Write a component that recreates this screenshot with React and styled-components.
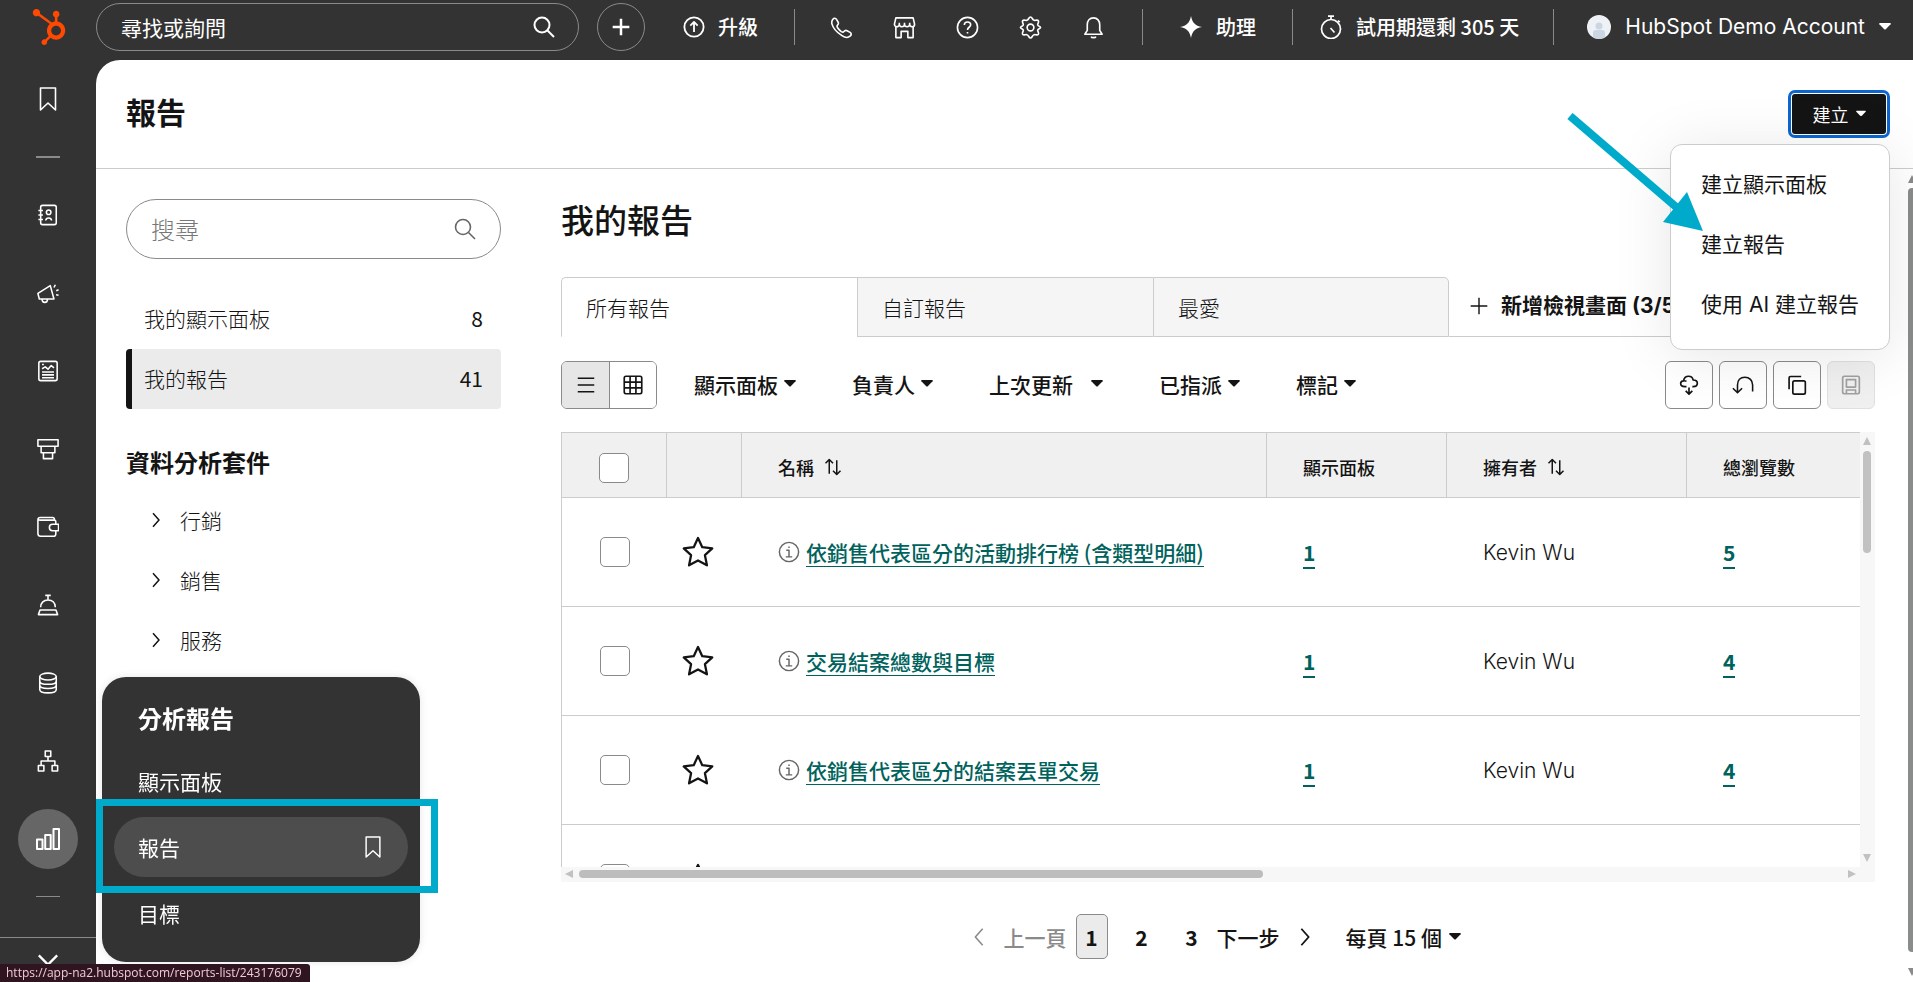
import styled, { createGlobalStyle, css } from 'styled-components'
import { FaHubspot } from 'react-icons/fa'

const ICONS = {
  search: <><circle cx="10" cy="10" r="7.5" /><path d="M15.5 15.5 22 22" /></>,
  plus: <path d="M12 2v20M2 12h20" />,
  upgrade: <><circle cx="12" cy="12" r="10.5" /><path d="M12 17.5V7M8 10.5l4-4 4 4" /></>,
  phone: <path d="M3 3.5C4 2 6 2 6.800 3.500L8.500 6.500c.8 1.400.2 2.300-.8 3.300-.7.8-.4 1.700.4 2.800 1 1.400 2.300 2.700 3.700 3.700 1.100.7 2 .9 2.700 0 1-1.300 2-1.700 3.300-1l3.200 1.800c1.500.9 1.500 2.600-.1 4-2.200 1.900-5 1.700-8.400-.6C7 17 3 12 2 8.200 1.500 6.300 2 4.800 3 3.500z" />,
  store: <><path d="M3 2h18l1.500 6.500c0 1.700-1.200 2.700-2.400 2.700s-2.700-1-2.700-2.500c0 1.500-1.400 2.500-2.700 2.500S12 10.200 12 8.700c0 1.500-1.400 2.500-2.700 2.500s-2.700-1-2.700-2.500c0 1.500-1.500 2.500-2.700 2.500S1.500 10.200 1.500 8.500L3 2zM6.600 8.700V7M12 8.700V7M17.400 8.700V7" /><path d="M3 11.200V22.500h5.500V16h7v6.500H21V11.200" /></>,
  help: <><circle cx="12" cy="12" r="10.5" /><path d="M8.700 9.500c0-2 1.400-3.300 3.300-3.300s3.300 1.200 3.300 3c0 2.500-3.300 2.600-3.300 5.300M12 16.800v1.400" /></>,
  gear: <><path d="M12 1c1.700 0 1.800 2.600 3.300 3.300 1.500.8 3.800-.9 4.900.6 1 1.500-.9 2.900-.7 4.500.1 1.200 3 1.500 3 2.600s-2.900 1.400-3 2.600c-.2 1.600 1.700 3 .7 4.500-1.100 1.500-3.400-.2-4.900.6-1.500.7-1.600 3.300-3.300 3.300s-1.800-2.600-3.300-3.300c-1.500-.8-3.800.9-4.900-.6-1-1.500.9-2.900.7-4.500-.1-1.200-3-1.500-3-2.600s2.900-1.400 3-2.600c.2-1.600-1.700-3-.7-4.500 1.100-1.500 3.400.2 4.900-.6C10.200 3.600 10.300 1 12 1z" /><circle cx="12" cy="12" r="3.5" /></>,
  bell: <><path d="M3 19h18l-2.500-4V9.200C18.500 5 16 2 12 2S5.500 5 5.500 9.200V15z" /><path d="M9.500 21.500c.6 1.500 4.400 1.500 5 0" /></>,
  timer: <><circle cx="12" cy="14" r="9.500" /><path d="M9 1.200h6M12 1.200v3.300M19 5.500l1.700 1.700M11.500 13l4 4.500" /></>,
  bookmark: <path d="M4.500 1h15v22L12 16l-7.500 7z" />,
  contacts: <><rect x="4" y="1.500" width="17" height="21" rx="2" /><path d="M1.500 7h5M1.500 12h5M1.500 17h5M9.500 18c.5-3.500 5.900-3.500 6.400 0" /><circle cx="12.700" cy="9" r="2.500" /></>,
  megaphone: <path d="M1 12.500 14.500 4l4 14.500H2.500zM5.500 18.500c0 5 6 5 6 0M18.500 6l1.500-3M21 9.500l2.500-1M20.800 14l2.700.5" />,
  content: <><rect x="2" y="1.500" width="20" height="21" rx="2" /><path d="M5.500 13h13M5.500 16.200h13M5.500 19.300h13M5.500 9.500l3.500-2 3 2.500 3.500-4 3 2.500M5.500 5h2" /></>,
  funnel: <path d="M1 2h22v7H1zM4.500 9h15v7h-15zM7 16h10v6.500H7z" />,
  wallet: <><path d="M20.500 9V6c0-1-.7-1.500-1.700-1.500H3.500C2 4.500 1 3.700 1 2.700M19 4.500V3.700c0-1.200-.7-2-2-2H3.500C2 1.700 1 2.700 1 4v15c0 2 1 3 3 3h14c1.700 0 2.500-.9 2.500-2.500V16" /><path d="M23.500 9H17a3.500 3.500 0 0 0 0 7h6.500z" /></>,
  service: <path d="M1.500 22.500h21l-1.800-5H3.300zM4 14.500c0-5 3.500-8 8-8s8 3 8 8M12 6.500V2M9 1.500h6" />,
  data: <><ellipse cx="12" cy="5" rx="9" ry="3.800" /><path d="M3 5v14c0 5 18 5 18 0V5M3 9.700c0 5 18 5 18 0M3 14.300c0 5 18 5 18 0" /></>,
  tree: <path d="M9 1h6v6H9zM1.500 17h6v6h-6zM16.500 17h6v6h-6zM12 7v5M4.500 17v-5h15v5" />,
  chart: <path d="M1 12.500h5.500V22H1zM9.200 8h5.500v14H9.200zM17.500 2H23v20h-5.500z" />,
  right: <path d="m8 3 8 9-8 9" />,
  left: <path d="m16 3-8 9 8 9" />,
  down: <path d="m2 7 10 10L22 7" />,
  list: <path d="M1 3h22M1 12h22M1 21h22" />,
  grid: <><rect x="1.500" y="1.500" width="21" height="21" rx="2" /><path d="M8.500 1.500v21M15.500 1.500v21M1.500 8.500h21M1.500 15.500h21" /></>,
  sort: <path d="M7 21V2M2 7l5-5 5 5M17 3v19M12 17l5 5 5-5" />,
  star: <path d="m12 1.500 3.200 6.900 7.500.9-5.500 5.100 1.500 7.600L12 18.300 5.300 22l1.500-7.600L1.300 9.300l7.500-.9z" />,
  info: <><circle cx="12" cy="12" r="10.5" /><path d="M9 10h3v7M8.500 17.300h7M12 6v1.700" /></>,
  cloud: <><path d="M7 14c-3 0-5-1.200-5-3.700S3.800 7 5.500 7C6 3.500 8.500 1.500 11.500 1.500S16.500 3.500 17 6c3 0 5 1.500 5 4s-2 4-5 4h-1M9 7.500c-1.500-.5-2.500-.7-3.500-.5M7 14h2" /><path d="M12 15v7.500M8 19l4 4 4-4" /></>,
  undo: <path d="M6 20V12c0-5 3-8.500 8-8.500s8.500 3.500 8.500 8.500v7M1 15.500l5 5 5-5" />,
  copy: <><rect x="7" y="7" width="15" height="16" rx="2" /><path d="M2.500 17V3.500c0-1 .6-1.700 1.700-1.700H17" /></>,
  save: <><rect x="2" y="1.500" width="20" height="21" rx="2" /><path d="M6.500 5.500h11v9h-11zM6.500 22.500V18h11v4.500" /></>,
}

const Icon = ({ name, size = 24, weight = 2 }) => (
  <svg width={size} height={size} viewBox="0 0 24 24" fill="none" stroke="currentColor" strokeWidth={weight} strokeLinejoin="round" aria-hidden="true">
    {ICONS[name]}
  </svg>
)

const Caret = ({ size = 12 }) => (
  <svg width={size} height={size} viewBox="0 0 12 12" fill="currentColor" aria-hidden="true">
    <path d="M1 2h10q1.300 0 .6 1.200L7 8q-1 1-2 0L.4 3.200Q-.3 2 1 2z" />
  </svg>
)

const NAV = ['contacts', 'megaphone', 'content', 'funnel', 'wallet', 'service', 'data', 'tree']
const TOOLS = ['phone', 'store', 'help', 'gear', 'bell']
const SUITES = ['行銷', '銷售', '服務']
const TABS = ['所有報告', '自訂報告', '最愛']
const FILTERS = [
  { label: '顯示面板' },
  { label: '負責人' },
  { label: '上次更新', wide: true },
  { label: '已指派' },
  { label: '標記' },
]
const REPORTS = [
  { id: 1, name: '依銷售代表區分的活動排行榜 (含類型明細)', boards: 1, owner: 'Kevin Wu', views: 5 },
  { id: 2, name: '交易結案總數與目標', boards: 1, owner: 'Kevin Wu', views: 4 },
  { id: 3, name: '依銷售代表區分的結案丟單交易', boards: 1, owner: 'Kevin Wu', views: 4 },
  { id: 4 },
]

const Dropdown = ({ label, wide }) => (
  <DropdownLabel $wide={wide}>
    <Select aria-label={label}>
      <option>{label}</option>
    </Select>
    <Caret />
  </DropdownLabel>
)

export default function App() {
  return (
    <>
      <GlobalStyle />
      <Shell>
        <TopBar>
          <Logo href="#" aria-label="HubSpot"><FaHubspot size={36} /></Logo>
          <GlobalSearch>
            <GlobalInput placeholder="尋找或詢問" aria-label="尋找或詢問" />
            <Icon name="search" />
          </GlobalSearch>
          <RoundButton aria-label="新增"><Icon name="plus" size={20} weight={3} /></RoundButton>
          <TopItem $left={38}><Icon name="upgrade" size={22} />升級</TopItem>
          <Divider $left={36} />
          <Tools>
            {TOOLS.map(name => (
              <ToolButton key={name} aria-label={name}><Icon name={name} size={23} weight={1.7} /></ToolButton>
            ))}
          </Tools>
          <Divider $left={17} />
          <TopItem $left={36}>
            <svg width="24" height="24" viewBox="0 0 24 24" fill="currentColor" aria-hidden="true">
              <path d="M12 1c1.500 7 4 9.500 11 11-7 1.500-9.500 4-11 11-1.500-7-4-9.500-11-11 7-1.500 9.500-4 11-11z" />
            </svg>
            助理
          </TopItem>
          <Divider $left={36} />
          <TopItem $left={26}><Icon name="timer" weight={1.7} />試用期還剩 305 天</TopItem>
          <Divider $left={34} />
          <Account>
            <svg width="24" height="24" viewBox="0 0 24 24" aria-hidden="true">
              <circle cx="12" cy="12" r="12" fill="#eef2f7" />
              <path d="M6 22v-4q0-3 3-3h6q3 0 3 3v4q-6 4-12 0z" fill="#cbd6e2" />
              <circle cx="12" cy="11" r="3.5" fill="#cbd6e2" />
            </svg>
            <span>HubSpot Demo Account</span>
            <Caret />
          </Account>
        </TopBar>

        <Body>
          <SideNav aria-label="主選單">
            <NavLink href="#" aria-label="bookmark"><Icon name="bookmark" weight={1.6} /></NavLink>
            <Dash $tall />
            {NAV.map(name => (
              <NavLink key={name} href="#" aria-label={name}><Icon name={name} size={22} weight={1.7} /></NavLink>
            ))}
            <NavLink href="#" aria-label="chart" $active><span><Icon name="chart" /></span></NavLink>
            <Dash />
            <Expand aria-label="展開"><Icon name="down" size={22} weight={2.5} /></Expand>
          </SideNav>

          <Page>
            <PageHeader>
              <PageTitle>報告</PageTitle>
              <CreateWrap>
                <CreateButton aria-expanded="true">建立<Caret size={10} /></CreateButton>
                <CreateMenu>
                  <MenuItem>建立顯示面板</MenuItem>
                  <MenuItem>建立報告</MenuItem>
                  <MenuItem>使用 AI 建立報告</MenuItem>
                </CreateMenu>
                <Pointer width="136" height="120" viewBox="0 0 136 120" aria-hidden="true">
                  <path d="M3 3 115 99" stroke="#00aacb" strokeWidth="8" />
                  <path d="M136 118 96 109 120 79z" fill="#00aacb" />
                </Pointer>
              </CreateWrap>
            </PageHeader>

            <Content>
              <Aside>
                <SearchBox>
                  <SearchInput placeholder="搜尋" aria-label="搜尋" />
                  <Icon name="search" weight={1.6} />
                </SearchBox>
                <ListLink href="#">我的顯示面板<span>8</span></ListLink>
                <ListLink href="#" $active>我的報告<span>41</span></ListLink>
                <SuiteTitle>資料分析套件</SuiteTitle>
                {SUITES.map(name => (
                  <SuiteButton key={name}><Icon name="right" size={18} />{name}</SuiteButton>
                ))}
              </Aside>

              <Main>
                <MainTitle>我的報告</MainTitle>
                <Tabs>
                  {TABS.map((name, i) => <Tab key={name} $active={i === 0}>{name}</Tab>)}
                  <AddView><Icon name="plus" size={20} weight={1.7} />新增檢視畫面 (3/5)</AddView>
                </Tabs>

                <Toolbar>
                  <Toggle>
                    <ToggleButton $active aria-label="清單"><Icon name="list" size={18} /></ToggleButton>
                    <ToggleButton aria-label="格線"><Icon name="grid" size={20} /></ToggleButton>
                  </Toggle>
                  <Filters>
                    {FILTERS.map(f => <Dropdown key={f.label} {...f} />)}
                  </Filters>
                  <Actions>
                    <ActionButton aria-label="匯出"><Icon name="cloud" size={20} /></ActionButton>
                    <ActionButton aria-label="復原"><Icon name="undo" size={22} weight={1.7} /></ActionButton>
                    <ActionButton aria-label="複製"><Icon name="copy" size={20} /></ActionButton>
                    <ActionButton aria-label="儲存" disabled><Icon name="save" size={20} /></ActionButton>
                  </Actions>
                </Toolbar>

                <TableFrame>
                  <TableClip>
                    <Table>
                      <colgroup>
                        <Col $w={105} /><Col $w={75} /><col /><Col $w={180} /><Col $w={240} /><Col $w={173} />
                      </colgroup>
                      <thead>
                        <tr>
                          <Th $tight><Checkbox type="checkbox" aria-label="全選" /></Th>
                          <Th $tight aria-label="最愛" />
                          <Th><Cell $gap={10}>名稱<Icon name="sort" size={18} /></Cell></Th>
                          <Th>顯示面板</Th>
                          <Th><Cell $gap={10}>擁有者<Icon name="sort" size={18} /></Cell></Th>
                          <Th>總瀏覽數</Th>
                        </tr>
                      </thead>
                      <tbody>
                        {REPORTS.map(r => (
                          <tr key={r.id}>
                            <Td $tight><Checkbox type="checkbox" aria-label={r.name || '選取'} /></Td>
                            <Td $tight><StarButton aria-label="加到最愛"><Icon name="star" size={32} weight={1.7} /></StarButton></Td>
                            <Td>
                              {r.name && (
                                <Cell $gap={6}>
                                  <Info><Icon name="info" size={22} weight={1.6} /></Info>
                                  <ReportLink href="#">{r.name}</ReportLink>
                                </Cell>
                              )}
                            </Td>
                            <Td>{r.boards && <NumberLink href="#">{r.boards}</NumberLink>}</Td>
                            <Td><Owner>{r.owner}</Owner></Td>
                            <Td>{r.views && <NumberLink href="#">{r.views}</NumberLink>}</Td>
                          </tr>
                        ))}
                      </tbody>
                    </Table>
                  </TableClip>
                  <TrackY>
                    <Arrow $dir="up" />
                    <ThumbY />
                    <Arrow $dir="down" />
                  </TrackY>
                  <TrackX>
                    <Arrow $dir="left" />
                    <ThumbX />
                    <Arrow $dir="right" />
                  </TrackX>
                </TableFrame>

                <Pagination aria-label="分頁">
                  <StepButton disabled><Icon name="left" size={22} weight={1.7} />上一頁</StepButton>
                  <PageButton $active>1</PageButton>
                  <PageButton>2</PageButton>
                  <PageButton>3</PageButton>
                  <StepButton>下一步<Icon name="right" size={22} /></StepButton>
                  <Dropdown label="每頁 15 個" />
                </Pagination>
              </Main>

              <PageScroll>
                <Arrow $dir="up" $dark />
                <PageThumb />
                <Arrow $dir="down" $dark />
              </PageScroll>
            </Content>
          </Page>
        </Body>
      </Shell>

      <Flyout>
        <FlyoutTitle>分析報告</FlyoutTitle>
        <FlyoutLink href="#">顯示面板</FlyoutLink>
        <FlyoutLink href="#" $active>報告<Icon name="bookmark" size={22} weight={1.6} /></FlyoutLink>
        <FlyoutLink href="#">目標</FlyoutLink>
        <Highlight />
      </Flyout>
      <StatusUrl>https://app-na2.hubspot.com/reports-list/243176079</StatusUrl>
    </>
  )
}

const GlobalStyle = createGlobalStyle`
  * {
    box-sizing: border-box;
  }

  body {
    margin: 0;
    background-color: #333333;
    color: #141414;
    font-family: 'Noto Sans CJK TC', sans-serif;
    font-size: 21px;
    line-height: 30px;
    overflow: hidden;
  }

  button, input, select {
    margin: 0;
    padding: 0;
    border: none;
    background: none;
    color: inherit;
    font: inherit;
  }

  a {
    color: inherit;
    text-decoration: none;
  }

  svg {
    flex-shrink: 0;
    display: block;
  }
`

const Shell = styled.div`
  height: 100vh;
  display: flex;
  flex-direction: column;
`

const TopBar = styled.header`
  height: 60px;
  padding: 0 22px 6px 0;
  display: flex;
  flex-shrink: 0;
  align-items: center;
  color: #ffffff;
`

const Logo = styled.a`
  width: 96px;
  padding-left: 2px;
  display: flex;
  justify-content: center;
  color: #ff4800;
`

const GlobalSearch = styled.div`
  width: 483px;
  height: 48px;
  padding: 0 22px 0 24px;
  display: flex;
  align-items: center;
  border: 1px solid #8a8a8a;
  border-radius: 24px;
`

const GlobalInput = styled.input`
  flex: 1;
  min-width: 0;
  outline: none;

  &::placeholder {
    color: #ffffff;
    opacity: 1;
  }
`

const RoundButton = styled.button`
  width: 48px;
  height: 48px;
  margin-left: 18px;
  display: flex;
  flex-shrink: 0;
  align-items: center;
  justify-content: center;
  border: 1px solid #8a8a8a;
  border-radius: 50%;
`

const TopItem = styled.button`
  margin-left: ${({ $left }) => $left}px;
  display: flex;
  align-items: center;
  gap: 13px;
  font-size: 20px;
  font-weight: 500;
  white-space: nowrap;
`

const Divider = styled.div`
  width: 1px;
  height: 36px;
  margin-left: ${({ $left }) => $left}px;
  flex-shrink: 0;
  background-color: #8a8a8a;
`

const Tools = styled.div`
  margin-left: 15px;
  display: flex;
`

const ToolButton = styled.button`
  width: 63px;
  height: 48px;
  display: flex;
  align-items: center;
  justify-content: center;
`

const Account = styled.button`
  margin-left: auto;
  display: flex;
  align-items: center;
  gap: 14px;
  font-family: Inter, 'Noto Sans CJK TC', sans-serif;
  white-space: nowrap;
`

const Body = styled.div`
  flex: 1;
  min-height: 0;
  display: flex;
`

const SideNav = styled.nav`
  width: 96px;
  display: flex;
  flex-direction: column;
  flex-shrink: 0;
  align-items: center;
  overflow: hidden;
  color: #ffffff;
`

const NavLink = styled.a`
  width: 96px;
  height: 78px;
  display: flex;
  flex-shrink: 0;
  align-items: center;
  justify-content: center;

  span {
    width: 60px;
    height: 60px;
    display: flex;
    align-items: center;
    justify-content: center;
    border-radius: 50%;
    background-color: #666666;
  }
`

const Dash = styled.div`
  width: 24px;
  height: ${({ $tall }) => ($tall ? 2 : 1)}px;
  margin: ${({ $tall }) => ($tall ? '18px 0' : '18px 0 40px')};
  flex-shrink: 0;
  background-color: #8a8a8a;
`

const Expand = styled.button`
  width: 96px;
  padding: 11px 0;
  display: flex;
  justify-content: center;
  border-top: 1px solid #8a8a8a;
`

const Page = styled.div`
  flex: 1;
  min-width: 0;
  display: flex;
  flex-direction: column;
  border-top-left-radius: 24px;
  background-color: #ffffff;
`

const PageHeader = styled.div`
  height: 109px;
  padding: 0 23px 0 30px;
  display: flex;
  flex-shrink: 0;
  align-items: center;
  justify-content: space-between;
  border-bottom: 1px solid #cccccc;
`

const PageTitle = styled.h1`
  margin: 0;
  padding-bottom: 6px;
  font-size: 30px;
  font-weight: 700;
  line-height: 40px;
`

const CreateWrap = styled.div`
  position: relative;
`

const CreateButton = styled.button`
  width: 94px;
  height: 40px;
  margin: 4px;
  display: flex;
  align-items: center;
  justify-content: center;
  gap: 7px;
  border-radius: 3px;
  background-color: #141414;
  box-shadow: 0 0 0 1px #ffffff, 0 0 0 4px #0b66d0;
  color: #ffffff;
  font-size: 18px;
`

const CreateMenu = styled.div`
  width: 220px;
  padding: 10px 0 14px;
  position: absolute;
  top: 54px;
  right: 0;
  z-index: 2;
  border: 1px solid #cccccc;
  border-radius: 12px;
  background-color: #ffffff;
  box-shadow: 0 6px 60px rgba(0, 0, 0, 0.1);
`

const MenuItem = styled.button`
  width: 100%;
  height: 60px;
  padding-left: 30px;
  display: block;
  font-family: Inter, 'Noto Sans CJK TC', sans-serif;
  text-align: left;
  white-space: nowrap;
`

const Pointer = styled.svg`
  position: absolute;
  top: 23px;
  right: 187px;
  z-index: 3;
`

const Content = styled.div`
  flex: 1;
  min-height: 0;
  display: flex;
`

const Aside = styled.aside`
  width: 405px;
  padding: 30px 0 0 30px;
  flex-shrink: 0;
`

const SearchBox = styled.div`
  height: 60px;
  margin-bottom: 30px;
  padding: 0 23px 0 24px;
  display: flex;
  align-items: center;
  border: 1px solid #8a8a8a;
  border-radius: 30px;
  color: #666666;
`

const SearchInput = styled.input`
  flex: 1;
  min-width: 0;
  font-size: 24px;
  font-weight: 300;
  outline: none;

  &::placeholder {
    color: #777777;
    opacity: 1;
  }
`

const ListLink = styled.a`
  height: 60px;
  padding: 0 18px 3px 12px;
  display: flex;
  align-items: center;
  justify-content: space-between;
  border-left: 6px solid transparent;
  border-radius: 4px;
  font-weight: 300;

  span {
    font-weight: 400;
  }

  ${({ $active }) => $active && css`
    border-left-color: #141414;
    background-color: #ebebeb;
  `}
`

const SuiteTitle = styled.h2`
  margin: 36px 0 12px;
  font-size: 24px;
  font-weight: 700;
  line-height: 34px;
`

const SuiteButton = styled.button`
  width: 100%;
  height: 60px;
  padding: 0 0 3px 21px;
  display: flex;
  align-items: center;
  gap: 15px;
  font-weight: 300;
`

const Main = styled.main`
  flex: 1;
  min-width: 0;
  padding: 26px 33px 23px 60px;
  display: flex;
  flex-direction: column;
`

const MainTitle = styled.h2`
  margin: 0 0 34px;
  font-size: 33px;
  font-weight: 500;
  line-height: 48px;
`

const Tabs = styled.div`
  height: 60px;
  display: flex;
  flex-shrink: 0;
`

const Tab = styled.button`
  width: 296px;
  padding-left: 24px;
  border: 1px solid #cccccc;
  border-right-width: 0;
  background-color: #f5f5f5;
  font-weight: 300;
  text-align: left;

  &:first-child {
    border-top-left-radius: 5px;
  }

  &:nth-child(3) {
    border-right-width: 1px;
    border-top-right-radius: 5px;
  }

  ${({ $active }) => $active && css`
    border-bottom-color: #ffffff;
    background-color: #ffffff;
  `}
`

const AddView = styled.button`
  flex: 1;
  min-width: 0;
  padding: 0 0 2px 20px;
  display: flex;
  align-items: center;
  gap: 12px;
  border-bottom: 1px solid #cccccc;
  font-family: Inter, 'Noto Sans CJK TC', sans-serif;
  font-weight: 700;
  white-space: nowrap;
`

const Toolbar = styled.div`
  height: 48px;
  margin: 24px 0 23px;
  display: flex;
  flex-shrink: 0;
  align-items: center;
`

const Toggle = styled.div`
  display: flex;
  border: 1px solid #8a8a8a;
  border-radius: 6px;
  overflow: hidden;
`

const ToggleButton = styled.button`
  width: 47px;
  height: 46px;
  display: flex;
  align-items: center;
  justify-content: center;
  background-color: ${({ $active }) => ($active ? '#e6e6e6' : '#ffffff')};

  & + & {
    border-left: 1px solid #8a8a8a;
  }
`

const Filters = styled.div`
  margin-left: 37px;
  padding-bottom: 2px;
  display: flex;
  gap: 56px;
`

const DropdownLabel = styled.label`
  display: flex;
  align-items: center;
  gap: ${({ $wide }) => ($wide ? 18 : 6)}px;
  font-weight: 500;
`

const Select = styled.select`
  appearance: none;
  outline: none;
`

const Actions = styled.div`
  margin-left: auto;
  display: flex;
  gap: 6px;
`

const ActionButton = styled.button`
  width: 48px;
  height: 48px;
  display: flex;
  align-items: center;
  justify-content: center;
  border: 1px solid #8a8a8a;
  border-radius: 6px;

  &:disabled {
    border-color: #e0e0e0;
    background-color: #f0f0f0;
    color: #a0a0a0;
  }
`

const TableFrame = styled.div`
  flex: 1;
  min-height: 0;
  display: grid;
  grid-template: minmax(0, 1fr) 15px / minmax(0, 1fr) 15px;
`

const TableClip = styled.div`
  border-left: 1px solid #cccccc;
  overflow: hidden;
`

const Table = styled.table`
  width: 100%;
  table-layout: fixed;
  border-spacing: 0;
`

const Col = styled.col`
  width: ${({ $w }) => $w}px;
`

const Th = styled.th`
  height: 66px;
  padding: 3px 0 0 ${({ $tight }) => ($tight ? 0 : 36)}px;
  border: 1px solid #cccccc;
  border-width: 1px 1px 1px 0;
  background-color: #f0f0f0;
  font-size: 18px;
  font-weight: 500;
  text-align: ${({ $tight }) => ($tight ? 'center' : 'left')};

  &:last-child {
    border-right: none;
  }
`

const Td = styled.td`
  height: 109px;
  padding: ${({ $tight }) => ($tight ? '0 0 3px' : '0 0 0 36px')};
  border-bottom: 1px solid #cccccc;
  text-align: ${({ $tight }) => ($tight ? 'center' : 'left')};
`

const Cell = styled.div`
  display: flex;
  align-items: center;
  gap: ${({ $gap }) => $gap}px;
`

const Checkbox = styled.input`
  width: 30px;
  height: 30px;
  display: inline-block;
  vertical-align: middle;
  appearance: none;
  border: 1px solid #8a8a8a;
  border-radius: 5px;
  background-color: #ffffff;
`

const StarButton = styled.button`
  display: inline-block;
  vertical-align: middle;
  margin-right: 14px;
`

const Info = styled.span`
  color: #666666;
`

const ReportLink = styled.a`
  border-bottom: 1px solid #00625c;
  color: #00625c;
  font-weight: 500;
  line-height: 28px;
  white-space: nowrap;
`

const NumberLink = styled.a`
  border-bottom: 2px solid #00625c;
  color: #00625c;
  font-weight: 700;
`

const Owner = styled.span`
  font-family: Inter, 'Noto Sans CJK TC', sans-serif;
  font-weight: 300;
`

const TrackY = styled.div`
  padding: 5px 4px 5px 3px;
  display: flex;
  flex-direction: column;
  align-items: center;
  background-color: #f7f7f7;
`

const TrackX = styled.div`
  grid-column: 1 / 3;
  padding: 3px 19px 4px 4px;
  display: flex;
  align-items: center;
  background-color: #f7f7f7;
`

const ThumbY = styled.div`
  width: 8px;
  height: 102px;
  margin: 6px 0 auto;
  border-radius: 4px;
  background-color: #c1c1c1;
`

const ThumbX = styled.div`
  width: 53%;
  height: 8px;
  margin: 0 auto 0 6px;
  border-radius: 4px;
  background-color: #bdbdbd;
`

const Arrow = styled.span`
  width: 8px;
  height: 8px;
  flex-shrink: 0;
  background-color: ${({ $dark }) => ($dark ? '#8a8a8a' : '#c1c1c1')};
  clip-path: ${({ $dir }) => ({
    up: 'polygon(50% 0, 100% 100%, 0 100%)',
    down: 'polygon(0 0, 100% 0, 50% 100%)',
    left: 'polygon(0 50%, 100% 0, 100% 100%)',
    right: 'polygon(0 0, 100% 50%, 0 100%)',
  })[$dir]};
`

const Pagination = styled.nav`
  margin-top: 32px;
  padding-right: 8px;
  display: flex;
  flex-shrink: 0;
  align-items: center;
  justify-content: center;
  font-weight: 500;

  label {
    margin-left: 30px;
  }
`

const StepButton = styled.button`
  display: flex;
  align-items: center;
  gap: 14px;
  font-weight: 500;

  &:disabled {
    color: #8a8a8a;
  }
`

const PageButton = styled.button`
  width: 32px;
  height: 45px;
  margin: 0 9px;
  border: 1px solid ${({ $active }) => ($active ? '#8a8a8a' : 'transparent')};
  border-radius: 5px;
  background-color: ${({ $active }) => ($active ? '#ebebeb' : 'transparent')};
  font-weight: 700;
`

const PageScroll = styled.div`
  width: 5px;
  padding: 6px 0;
  display: flex;
  flex-direction: column;
  overflow: hidden;
`

const PageThumb = styled.div`
  flex: 1;
  margin: 5px 0 16px;
  border-radius: 4px 0 0 4px;
  background-color: #8a8c8c;
`

const Flyout = styled.div`
  width: 318px;
  padding: 23px 12px 13px;
  position: fixed;
  left: 102px;
  bottom: 20px;
  z-index: 4;
  border-radius: 24px;
  background-color: #333333;
  box-shadow: 0 0 8px rgba(0, 0, 0, 0.1);
  color: #ffffff;
`

const FlyoutTitle = styled.h3`
  margin: 0 0 15px;
  padding-left: 24px;
  font-size: 24px;
  font-weight: 700;
  line-height: 36px;
`

const FlyoutLink = styled.a`
  height: 60px;
  margin-bottom: 6px;
  padding: 0 24px;
  display: flex;
  align-items: center;
  justify-content: space-between;
  border-radius: 30px;
  background-color: ${({ $active }) => ($active ? '#4d4d4d' : 'transparent')};
`

const Highlight = styled.div`
  width: 342px;
  height: 94px;
  position: absolute;
  left: -6px;
  top: 122px;
  border: 7px solid #00aacb;
  pointer-events: none;
`

const StatusUrl = styled.div`
  height: 18px;
  padding: 0 8px 0 6px;
  position: fixed;
  left: 0;
  bottom: 0;
  z-index: 5;
  border-top-right-radius: 3px;
  background-color: #2e1520;
  color: #f3c9d6;
  font-family: 'Open Sans', 'Noto Sans CJK TC', sans-serif;
  font-size: 12px;
  line-height: 18px;
`
